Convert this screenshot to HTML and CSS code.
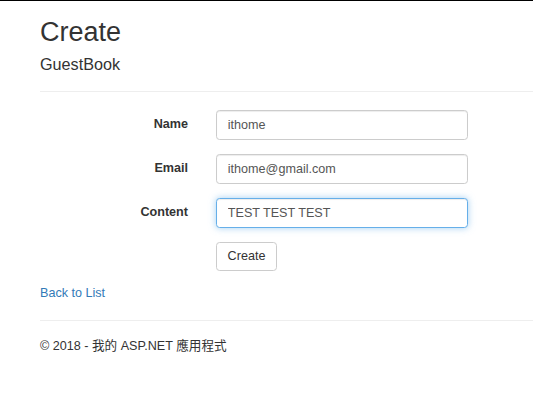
FILE: index.html
```html
<!DOCTYPE html>
<html lang="zh-Hant">
<head>
<meta charset="utf-8">
<title>Create</title>
<link rel="stylesheet" href="styles.css">
</head>
<body>
<div class="topbar"></div>
<div class="body-content">
  <h2 class="title">Create</h2>
  <form class="form-horizontal">
    <h4 class="subtitle">GuestBook</h4>
    <hr class="rule">
    <div class="form-group">
      <label class="control-label" for="Name">Name</label>
      <input class="form-control" id="Name" type="text" value="ithome">
    </div>
    <div class="form-group">
      <label class="control-label" for="Email">Email</label>
      <input class="form-control" id="Email" type="text" value="ithome@gmail.com">
    </div>
    <div class="form-group">
      <label class="control-label" for="Content">Content</label>
      <input class="form-control focused" id="Content" type="text" value="TEST TEST TEST">
    </div>
    <div class="form-group">
      <span class="spacer"></span>
      <div><button type="button" class="btn">Create</button></div>
    </div>
  </form>
  <div class="back"><a href="#">Back to List</a></div>
  <hr class="rule footer-rule">
  <footer class="footer">
    <p>© 2018 - 我的 ASP.NET 應用程式</p>
  </footer>
</div>
</body>
</html>
```

FILE: styles.css
```css
* { box-sizing: border-box; }
html, body {
  margin: 0;
  padding: 0;
  background: #fff;
}
body {
  font-family: "Liberation Sans", Arial, "Noto Sans CJK TC", sans-serif;
  font-size: 12.6px;
  line-height: 18px;
  color: #333;
}
.topbar {
  height: 1px;
  background: #000;
}
.body-content {
  padding-left: 40px;
}
.title {
  margin: 17px 0 0 0;
  font-size: 27px;
  line-height: 29.7px;
  font-weight: 500;
  color: #333;
}
.form-horizontal {
  margin: 0;
}
.subtitle {
  margin: 8px 0 0 0;
  font-size: 16.2px;
  line-height: 17.8px;
  font-weight: 500;
  color: #333;
}
.rule {
  margin: 17px 0 0 0;
  border: 0;
  border-top: 1px solid #eee;
  height: 0;
}
.form-horizontal .rule {
  margin-bottom: 18px;
}
.form-group {
  display: grid;
  grid-template-columns: 148px 252px;
  column-gap: 28px;
  margin-bottom: 14px;
}
.form-group:last-child {
  margin-bottom: 0;
}
.control-label {
  text-align: right;
  font-weight: bold;
  padding-top: 5px;
  line-height: 18px;
}
.form-control {
  display: block;
  width: 252px;
  height: 30px;
  padding: 5px 10.8px;
  font-family: "Liberation Sans", Arial, sans-serif;
  font-size: 12.6px;
  line-height: 18px;
  color: #555;
  background: #fff;
  border: 1px solid #ccc;
  border-radius: 3.6px;
  box-shadow: inset 0 1px 1px rgba(0,0,0,.075);
  outline: none;
  margin: 0;
}
.form-control.focused {
  border-color: #66afe9;
  box-shadow: inset 0 1px 1px rgba(0,0,0,.075), 0 0 7px rgba(102,175,233,.6);
}
.btn {
  display: inline-block;
  height: 29px;
  padding: 0 10.6px;
  font-family: "Liberation Sans", Arial, sans-serif;
  font-size: 12.6px;
  line-height: 27px;
  color: #333;
  background: #fff;
  border: 1px solid #ccc;
  border-radius: 3.6px;
  margin: 0;
  cursor: pointer;
}
.back {
  margin-top: 13px;
}
.back a {
  color: #337ab7;
  text-decoration: none;
}
.footer-rule {
  margin-top: 18px;
}
.footer p {
  margin: 16px 0 9px 0;
}
```
